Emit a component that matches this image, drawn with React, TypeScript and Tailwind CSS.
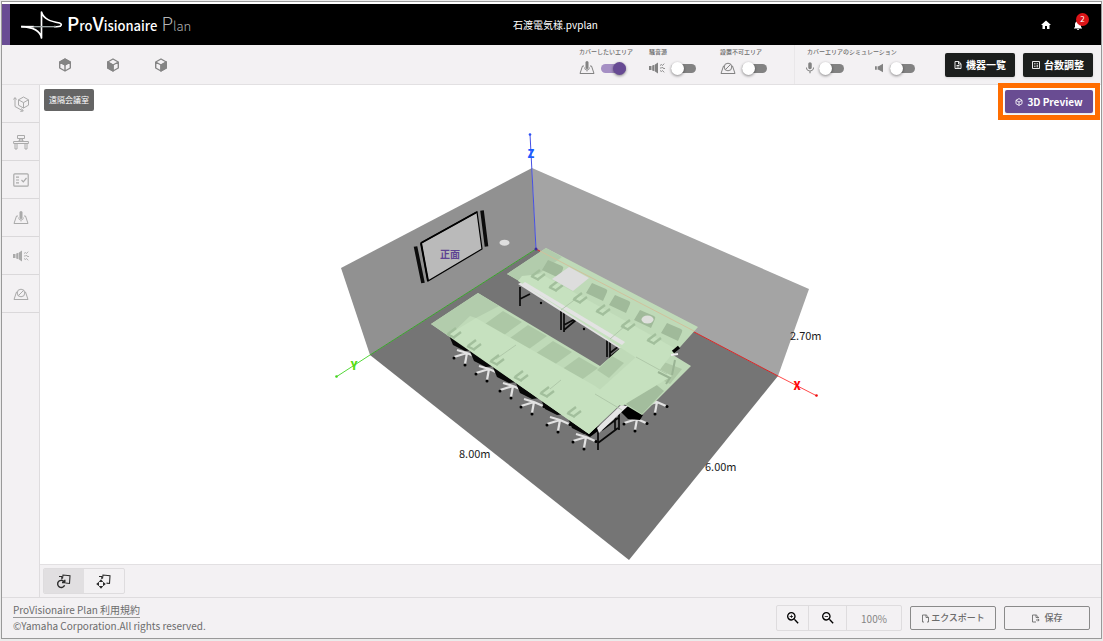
import type { ReactNode } from "react"
import { MdHome, MdMic, MdNotifications, MdZoomIn, MdZoomOut } from "react-icons/md"

type Point = [number, number]

const FONT = "font-['Noto_Sans_CJK_JP','Noto_Sans',sans-serif]"

function Logo() {
  return (
    <svg viewBox="58 22 128 90" className="h-[30px] w-[43px]" fill="none" stroke="#fff" strokeLinejoin="round">
      <path d="M61 72C92 73 117 80 122 106V28C128 50 150 56 176 61Q186 65 178 71Q172 73 160 72" strokeWidth="5" />
      <path d="M61 72H100" strokeWidth="5" />
      <path d="M98 72H165" strokeWidth="4" stroke="#9ca5a5" />
    </svg>
  )
}

function CubeIcon({ face }: { face: "top" | "left" | "right" }) {
  return (
    <svg viewBox="0 0 14 14" className="h-3.5 w-3.5" fill="none" stroke="currentColor" strokeWidth="1.4" strokeLinejoin="round">
      <path d="M7 1l5.3 3v6L7 13l-5.3-3V4zM1.7 4L7 7l5.3-3M7 7v6" />
      {face === "top" && <path d="M7 1l5.3 3L7 7 1.7 4z" fill="currentColor" />}
      {face === "left" && <path d="M1.7 4L7 7v6l-5.3-3z" fill="currentColor" />}
      {face === "right" && <path d="M12.3 4L7 7v6l5.3-3z" fill="currentColor" />}
    </svg>
  )
}

function AreaIcon() {
  return (
    <svg viewBox="0 0 16 14" className="h-3.5 w-4" fill="none" stroke="currentColor">
      <path d="M5 5H3.5L1 12.5h14L12.5 5H11" />
      <path d="M5.500 6.500a2.500 2.500 0 0 0 5 0M8 9v1.500" strokeWidth=".8" />
      <rect x="6.500" y="0" width="3" height="8" rx="1.500" fill="currentColor" stroke="none" />
    </svg>
  )
}

function NoiseIcon() {
  return (
    <svg viewBox="0 0 16 14" className="h-3.5 w-4" fill="none" stroke="currentColor">
      <path d="M0 5h2.500v4H0zM3.200 4.500l2.300-.8v6.600l-2.300-.8zM6 3.500l3-2v11l-3-2z" fill="currentColor" stroke="none" />
      <path d="M11 4.500l1.500-1 .8 1 2-1.800M11 7h1.500l1-1 .8 1.500H16M11 9.500l1.500 1 .8-1 2 1.800" strokeWidth=".9" />
    </svg>
  )
}

function BlockedIcon() {
  return (
    <svg viewBox="0 0 16 14" className="h-3.5 w-4" fill="none" stroke="currentColor">
      <path d="M4.200 5H3.500L1 12.500h14L12.500 5h-.7" />
      <circle cx="8" cy="6" r="3.800" />
      <path d="M5.400 8.600l5.200-5.200" />
    </svg>
  )
}

function SpeakerIcon() {
  return (
    <svg viewBox="0 0 10 10" className="h-2.5 w-2.5" fill="currentColor">
      <path d="M1 3.200h1.800v3.600H1zM3.600 3.200h1L9 .8v8.400L4.600 6.800h-1z" />
    </svg>
  )
}

function RoomIcon() {
  return (
    <svg viewBox="0 0 16 16" className="h-4 w-4" fill="none" stroke="currentColor" strokeLinejoin="round">
      <path d="M10.500 1l5 2.800v5.400l-5 2.800-5-2.800V3.800zM5.500 3.800l5 2.800 5-2.800M10.500 6.600V12" />
      <path d="M2 2v8.500l7.500 4.200M.5 3.500L2 1.500l1.500 2M8.500 12.500l1.800 2.500-3 .4" />
    </svg>
  )
}

function FurnitureIcon() {
  return (
    <svg viewBox="0 0 16 16" className="h-4 w-4" fill="none" stroke="currentColor">
      <path d="M.6 7.500h14.800v2H.6zM2 9.500V15h2V9.500M12 9.500V15h2V9.500M4.500 1.500h7v3h-7zM6 4.500l1 1.500-2 1.500M10 4.500L9 6l2 1.500M6 6h4" />
    </svg>
  )
}

function ChecklistIcon() {
  return (
    <svg viewBox="0 0 16 14" className="h-3.5 w-4" fill="none" stroke="currentColor" strokeWidth="1.200">
      <rect x=".8" y=".8" width="14.400" height="12.400" rx="1" />
      <path d="M3 4.200h3M3 7h3M3 9.800h3M8.500 7l1.800 1.800L13.500 5" />
    </svg>
  )
}

function PageIcon() {
  return (
    <svg viewBox="0 0 8 8" className="h-2 w-2" fill="none" stroke="currentColor" strokeWidth=".9">
      <path d="M1 .5h3.800L7 2.700v4.800H1zM4.500.5V3H7M2.500 4.500h3M2.500 6h3" />
    </svg>
  )
}

function CountIcon() {
  return (
    <svg viewBox="0 0 8 8" className="h-2 w-2" fill="none" stroke="currentColor" strokeWidth=".9">
      <path d="M.5.5h7v7h-7zM2 2.800h1.600M4.600 2.800H6M2 5.200h1.600M4.600 4.700H6M4.600 5.800H6" />
    </svg>
  )
}

function ExportIcon({ save = false }: { save?: boolean }) {
  return (
    <svg viewBox="0 0 9 9" className="h-[9px] w-[9px]" fill="none" stroke="currentColor" strokeWidth=".9">
      {save ? (
        <path d="M5 8H1.500V1h3.800L7.500 3.200V4M5 1v2.500h2.500M5 6h3M6.800 4.800L8.200 6 6.800 7.300" />
      ) : (
        <path d="M3 8H1.500V1h3.800l2.200 2.200V8H6M5 1v2.500h2.500" />
      )}
    </svg>
  )
}

function RotateIcon() {
  return (
    <svg viewBox="0 0 16 16" className="h-4 w-4" fill="none" stroke="currentColor" strokeWidth="1.100">
      <path d="M6.500 5.500L7 2l7 .8-.5 7.700-4-.5" />
      <path d="M3 3.500h2.800v3" />
      <path d="M8.300 9A3.600 3.600 0 1 0 8.600 12.300M8.800 6.800v2.700H6" strokeWidth="1.400" />
    </svg>
  )
}

function MoveIcon() {
  return (
    <svg viewBox="0 0 16 16" className="h-4 w-4" fill="none" stroke="currentColor" strokeWidth="1.100">
      <path d="M6.500 5.500L7 2l7 .8-.5 7.700-3-.4" />
      <path d="M3 3.500h2.800v2.500" />
      <path d="M5 6.200L7.300 9H2.700zM5 15.800L7.300 13H2.700zM.2 11L3 8.700v4.600zM9.800 11L7 8.700v4.600z" fill="currentColor" stroke="none" />
    </svg>
  )
}

function Switch({ label, on = false }: { label: string; on?: boolean }) {
  return (
    <input
      type="checkbox"
      role="switch"
      aria-label={label}
      defaultChecked={on}
      className="relative h-[9px] w-[25px] cursor-pointer appearance-none rounded-full bg-[#828282] before:absolute before:-top-0.5 before:left-0 before:h-[13px] before:w-[13px] before:rounded-full before:bg-white before:shadow-[0_1px_3px_rgba(0,0,0,0.45)] before:content-[''] checked:bg-[#a58fc4] checked:before:left-3 checked:before:bg-[#674a93]"
    />
  )
}

interface ToggleGroupProps {
  title: string
  className: string
  children: ReactNode
}

function ToggleGroup({ title, className, children }: ToggleGroupProps) {
  return (
    <div className={`flex flex-col gap-1 pt-[3px] text-[#828282] ${className}`}>
      <span className="text-[6px] leading-2 font-medium whitespace-nowrap text-[#6b6b6b]">{title}</span>
      <div className="flex h-4 items-center gap-1.5">{children}</div>
    </div>
  )
}

const poly = (points: Point[]) => points.map((p) => p.join(",")).join(" ")

const CHAIRS: Point[] = [[467, 353], [489, 369], [513, 386], [534, 402], [560, 420], [586, 437], [637, 419], [657, 402]]
const SEATS: Point[] = [[449, 337], [470, 353], [493, 369], [516, 385], [541, 401], [568, 420]]
const BACKS: Point[] = [[548, 260], [592, 283], [615, 295], [640, 310], [667, 323]]
const SLATS: Point[] = [[503, 311], [528, 325], [553, 341], [579, 357]]
const ARMS: Point[] = [
  [452, 331], [472, 343], [495, 358], [519, 374], [545, 390], [572, 410],
  [536, 273], [554, 284], [578, 296], [601, 308], [626, 323], [652, 337],
]

function RoomScene() {
  return (
    <svg viewBox="40 85 1061 479" className="h-full w-full" role="img" aria-label="3D">
      {/* Walls and floor */}
      <polygon points="532,168 341,268 370,355 536,249" fill="#919191" />
      <polygon points="532,168 809,289 778,376 536,249" fill="#a4a4a4" />
      <polygon points="536,249 778,376 629,560 370,355" fill="#757575" />

      {/* Display with side speakers */}
      <polygon points="421,243 477,212 482,249 428,281" fill="#bababa" stroke="#000" strokeWidth="1.200" />
      <path d="M421 243l7 38M421 243l56-31" stroke="#000" strokeWidth="2" />
      <path d="M415.500 246.500l7.500 36.500M482 210.500l4.500 36" stroke="#0c0c0c" strokeWidth="3.600" />
      <text x="450" y="258" textAnchor="middle" fontSize="10" fontWeight="700" fill="#5e4392">正面</text>
      <ellipse cx="504.500" cy="242.700" rx="5" ry="3" fill="#dedede" />

      {/* Axes */}
      <g strokeWidth="1">
        <path d="M536 249L530 134" stroke="#4650e4" />
        <path d="M536 249L370 355" stroke="#3aa52c" />
        <path d="M370 355L336 377" stroke="#55d83a" />
        <path d="M536 249L778 376" stroke="#dc2424" />
        <path d="M778 376L817 396" stroke="#ff4a4a" />
      </g>
      <circle cx="530" cy="134.500" r="1.300" fill="#2b50f5" />
      <circle cx="336.500" cy="376.500" r="1.300" fill="#45d520" />
      <circle cx="816.500" cy="395.500" r="1.300" fill="#f01010" />
      <circle cx="536" cy="249" r="1.500" fill="#3a2c9c" />

      {/* Chair bases */}
      {CHAIRS.map(([x, y]) => (
        <g key={`${x}-${y}`} transform={`translate(${x} ${y})`}>
          <path d="M0 0L-13 4M0 0L-2 11M0 0L9 4M0 0L-10-3" stroke="#e2e2e2" strokeWidth="2.200" fill="none" />
          <circle cx="-13" cy="5" r="1.500" />
          <circle cx="-2" cy="12" r="1.500" />
          <circle cx="10" cy="4.500" r="1.500" />
        </g>
      ))}
      {SEATS.map(([x, y]) => (
        <path key={x} transform={`translate(${x} ${y})`} d="M-1-4L4 8 16 14 25 13 12 2z" fill="#070707" />
      ))}
      <path d="M620 411l6-8 17 12-3 5-12-1z" />
      <path d="M585 434l5 3 12-9v-4z" />

      {/* Desk frames */}
      <path d="M520 287v19M520 299l10-5M561 311v19M564 312v20M564 325l11-6M564 330l12-10M607 340v17M610 341v17M610 353l9-7M610 357l10-8" stroke="#0a0a0a" strokeWidth="1.700" />
      <path d="M598 430v20M619 411v19M615 412v18M598 443l20-15M602 430l16-12" stroke="#0a0a0a" strokeWidth="1.700" />
      <circle cx="541" cy="303" r="1.200" />
      <circle cx="584" cy="329" r="1.200" />
      <path d="M518 284l4-2 104 59-6 8z" fill="#e3e3e3" />
      <path d="M597 428l24-23 7 1-29 27z" fill="#e6e6e6" />

      {/* Coverage areas */}
      <polygon points="546,248 698,327 673,355 691,366 642,415 622,403 589,434 431,324 478,293 600,366 625,344 507,274" fill="#bfdab8" />
      <polygon points="478,293 499,306 476,318 470,316 449,336 431,324" fill="#b2ccac" />
      <polygon points="546,248 562,257 536,276 525,284 507,274" fill="#b2ccac" />
      {SLATS.map(([x, y]) => (
        <polygon key={x} points={poly([[x, y], [x + 19, y + 11], [x + 1, y + 24], [x - 18, y + 13]])} fill="#adc8a6" />
      ))}
      {BACKS.map(([x, y]) => (
        <path key={x} transform={`translate(${x} ${y})`} d="M0 0L14 6Q16 7 15 9L11 18-6 10z" fill="#a0ba9a" />
      ))}
      <polygon points="648,378 664,391 642,414 626,404" fill="#a3bd9d" />
      <polygon points="664,362 682,369 670,384 656,377" fill="#adc7a5" />
      <polygon points="612,356 624,363 609,378 597,370" fill="#adc8a6" />
      <polygon points="541,274 676,349 658,372 518,281 522,276" fill="#c6e1bf" />
      <path d="M522 284l3-2 100 60-3 3z" fill="#e3e3e3" />
      <polygon points="476,318 595,386 620,404 589,434 448,335" fill="#c6e1bf" />
      <polygon points="595,394 636,357 661,370 672,376 622,406" fill="#c6e1bf" />
      <path d="M577 298l-16 12M625 326l-15 13M516 345l-20 14M561 380l-11 9M595 394l27 16M636 357l31 17" stroke="#a9c2a3" strokeWidth=".8" />
      {ARMS.map(([x, y]) => (
        <path key={x} transform={`translate(${x} ${y})`} d="M-4 3L4-3M1 7L9 1M-5 3L3 7" stroke="#a2bf9c" strokeWidth="2.400" />
      ))}
      <path d="M658 372l12 6-4 6M675 360l-3 15" stroke="#9ab494" strokeWidth="2" fill="none" />
      <path d="M673 352l6-5" stroke="#050505" strokeWidth="3.500" />
      <path d="M671 355l7-1" stroke="#eeeeee" strokeWidth="2" />
      <path d="M540 251L694 331" stroke="#d1c09c" strokeWidth="1" />

      {/* Ceiling equipment */}
      <polygon points="552,279 569,267 589,278 573,291" fill="#dddddd" />
      <ellipse cx="647.500" cy="319.500" rx="6" ry="4" fill="#dedfdc" />

      {/* Axis names and room size */}
      <g textAnchor="middle" fontSize="11" fontWeight="900">
        <text x="531" y="158" fill="#1b5cff">Z</text>
        <text x="354" y="370" fill="#55dc12">Y</text>
        <text x="797" y="390" fill="#ff0808">X</text>
      </g>
      <g fontSize="11" fill="#1c1c1c">
        <text x="790" y="340">2.70m</text>
        <text x="459" y="458">8.00m</text>
        <text x="705" y="471">6.00m</text>
      </g>
    </svg>
  )
}

const TOOLS = [
  { name: "部屋", icon: <RoomIcon /> },
  { name: "家具", icon: <FurnitureIcon /> },
  { name: "機器", icon: <ChecklistIcon /> },
  { name: "カバーしたいエリア", icon: <AreaIcon /> },
  { name: "騒音源", icon: <NoiseIcon /> },
  { name: "設置不可エリア", icon: <BlockedIcon /> },
]

export default function App() {
  return (
    <div className={`h-screen bg-[#ebebeb] px-px pt-px pb-0.5 text-[#6c6c6c] ${FONT}`}>
      <div className="flex h-full flex-col border border-[#999999] bg-[#f3f1f3] shadow-[inset_0_2px_0_#fff]">
        {/* Header */}
        <header className="mt-0.5 grid h-[41px] shrink-0 grid-cols-3 items-center border-l-8 border-[#694c94] bg-black text-white">
          <div className="flex items-center gap-1 pl-2.5">
            <Logo />
            <h1 className="flex items-baseline text-[13px] leading-5 font-medium whitespace-nowrap">
              <span className="text-[19px]">P</span>ro<span className="text-[19px]">V</span>isionaire
              <span className="ml-1 font-light text-[#b5b5b5]">
                <span className="text-[19px]">P</span>lan
              </span>
            </h1>
          </div>
          <p className="text-center text-[10px] leading-4">石渡電気様.pvplan</p>
          <div className="flex items-center justify-end gap-5 pr-[17px]">
            <button aria-label="ホーム">
              <MdHome className="h-3 w-3" />
            </button>
            <button aria-label="通知" className="relative">
              <MdNotifications className="h-3 w-3" />
              <span className="absolute -top-1.5 left-1 flex h-[13px] w-[13px] items-center justify-center rounded-full bg-[#dc1418] text-[8px] leading-3">
                2
              </span>
            </button>
          </div>
        </header>

        {/* Toolbar */}
        <div className="flex h-10 shrink-0 items-stretch border-b border-[#e2e0e2] pr-2">
          <div className="ml-[39px] flex text-[#858585]">
            <button aria-label="上面" className="flex w-12 items-center justify-center"><CubeIcon face="top" /></button>
            <button aria-label="左面" className="flex w-12 items-center justify-center"><CubeIcon face="left" /></button>
            <button aria-label="右面" className="flex w-12 items-center justify-center"><CubeIcon face="right" /></button>
          </div>
          <div className="ml-auto flex">
            <ToggleGroup title="カバーしたいエリア" className="w-[70px]">
              <AreaIcon />
              <Switch label="カバーしたいエリア" on />
            </ToggleGroup>
            <ToggleGroup title="騒音源" className="w-[71px]">
              <NoiseIcon />
              <Switch label="騒音源" />
            </ToggleGroup>
            <ToggleGroup title="設置不可エリア" className="w-[74px]">
              <BlockedIcon />
              <Switch label="設置不可エリア" />
            </ToggleGroup>
            <ToggleGroup title="カバーエリアのシミュレーション" className="w-[151px] border-l border-[#e9e7e9] pl-3">
              <MdMic className="-mx-1 h-3.5 w-3.5" />
              <Switch label="マイク" />
              <span className="ml-6"><SpeakerIcon /></span>
              <Switch label="スピーカー" />
            </ToggleGroup>
          </div>
          <div className="flex items-center gap-2">
            <button className="flex h-6 w-[70px] items-center justify-center gap-1 rounded-xs bg-[#1c1e1d] text-[10px] font-bold text-white shadow">
              <PageIcon />
              機器一覧
            </button>
            <button className="flex h-6 w-[70px] items-center justify-center gap-1 rounded-xs bg-[#1c1e1d] text-[10px] font-bold text-white shadow">
              <CountIcon />
              台数調整
            </button>
          </div>
        </div>

        {/* Workspace */}
        <div className="flex min-h-0 flex-1">
          <nav className="w-[38px] shrink-0 border-r border-[#dedcde] text-[#aaaaaa]">
            {TOOLS.map((tool) => (
              <button key={tool.name} aria-label={tool.name} className="flex h-[38px] w-full items-center justify-center border-b border-[#dad8da]">
                {tool.icon}
              </button>
            ))}
          </nav>
          <div className="flex min-w-0 flex-1 flex-col">
            <main className="relative min-h-0 flex-1 bg-white">
              <RoomScene />
              <div className="absolute top-1 left-1 flex h-[22px] items-center rounded-xs bg-[#656565] px-[5px] text-[8px] text-white">
                遠隔会議室
              </div>
              <div className="absolute -top-0.5 right-px border-5 border-[#ff6d00] bg-white p-0.5">
                <button className="flex h-[23px] w-[88px] items-center justify-center gap-1 rounded-xs bg-[#694c92] text-[10px] font-bold text-white shadow">
                  <svg viewBox="0 0 14 14" className="h-2 w-2" fill="none" stroke="currentColor" strokeWidth="1.500">
                    <path d="M7 1l5.300 3v6L7 13l-5.300-3V4zM1.700 4L7 7l5.300-3M7 7v6" />
                  </svg>
                  3D Preview
                </button>
              </div>
            </main>
            <div className="flex h-[33px] shrink-0 items-center border-t border-[#e2e0e2] px-[3px]">
              <div className="flex h-[26px] overflow-hidden rounded-xs border border-[#dedcde] text-[#2b2b2b]">
                <button aria-label="回転" className="flex w-10 items-center justify-center bg-[#e1dfe1]">
                  <RotateIcon />
                </button>
                <button aria-label="移動" className="flex w-10 items-center justify-center">
                  <MoveIcon />
                </button>
              </div>
            </div>
          </div>
        </div>

        {/* Footer */}
        <footer className="flex h-[41px] shrink-0 items-center justify-between border-t border-[#dedcde] px-[11px]">
          <div className="text-[10px] leading-4">
            <a href="#terms" className="border-b border-[#999999] leading-3">ProVisionaire Plan 利用規約</a>
            <p>©Yamaha Corporation.All rights reserved.</p>
          </div>
          <div className="flex items-center gap-2">
            <div className="flex h-[26px] items-stretch divide-x divide-[#dedcde] rounded-xs border border-[#dedcde]">
              <button aria-label="拡大" className="flex w-8 items-center justify-center text-black">
                <MdZoomIn className="h-4 w-4" />
              </button>
              <button aria-label="縮小" className="flex w-[38px] items-center justify-center text-black">
                <MdZoomOut className="h-4 w-4" />
              </button>
              <span className="flex w-[54px] items-center justify-center text-[10px] text-[#858585]">100%</span>
            </div>
            <button className="flex h-6 w-[86px] items-center justify-center gap-px rounded-xs border border-[#8a8a8a] text-[9px] font-medium">
              <ExportIcon />
              エクスポート
            </button>
            <button className="flex h-6 w-[86px] items-center justify-center gap-1 rounded-xs border border-[#8a8a8a] text-[9px] font-medium">
              <ExportIcon save />
              保存
            </button>
          </div>
        </footer>
      </div>
    </div>
  )
}
